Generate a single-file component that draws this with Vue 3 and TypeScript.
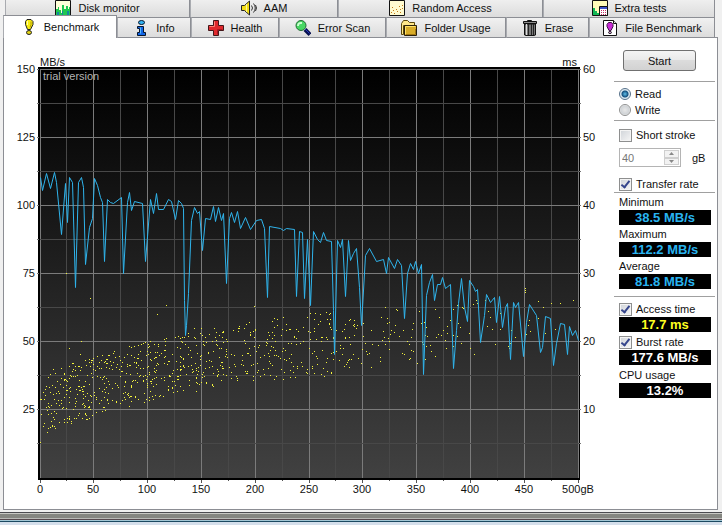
<script setup lang="ts">
import { ref } from 'vue'

interface Tab { label: string; icon: string }

const backTabs: Tab[] = [
  { label: 'Disk monitor', icon: 'monitor' },
  { label: 'AAM', icon: 'speaker' },
  { label: 'Random Access', icon: 'scatter' },
  { label: 'Extra tests', icon: 'extra' },
]
const frontTabs: Tab[] = [
  { label: 'Benchmark', icon: 'exclaim' },
  { label: 'Info', icon: 'info' },
  { label: 'Health', icon: 'cross' },
  { label: 'Error Scan', icon: 'magnifier' },
  { label: 'Folder Usage', icon: 'folder' },
  { label: 'Erase', icon: 'trash' },
  { label: 'File Benchmark', icon: 'file' },
]
const tabRows = [backTabs, frontTabs]
const active = ref('Benchmark')

const mode = ref('read')
const shortStroke = ref(false)
const strokeSize = ref('40')
const transferRate = ref(true)
const accessTime = ref(true)
const burstRate = ref(true)

const rates = [
  { label: 'Minimum', value: '38.5 MB/s' },
  { label: 'Maximum', value: '112.2 MB/s' },
  { label: 'Average', value: '81.8 MB/s' },
]

// Grid geometry, in chart units
const gridX = [40, 66, 93, 120, 147, 174, 201, 228, 255, 282, 309, 335, 362, 389, 416, 443, 470, 497, 524, 551, 578]
const gridY = [69, 103, 137, 171, 205, 239, 273, 307, 341, 375, 409, 443]
const xLabels = gridX.filter((_, i) => i % 2 === 0).map((x, i) => ({ x, text: i === 10 ? '500gB' : String(i * 50) }))
const yLabels = gridY.filter((_, i) => i % 2 === 0).map((y, i) => ({ y, left: 150 - i * 25, right: 60 - i * 10 }))

const transferLine = `40,177 42,190 46,173 50,188 54,172 56,182 61,234 65,183 67,222 69,177 72,182 75,287 78,182 81,177 83,187 85,264 89,227 92,218
94,178 97,185 100,197 102,202 104,261 107,199 110,202 113,203 121,197 123,273 127,202 129,192 131,210 134,201 142,203 145,261 150,199 153,213
156,193 158,209 163,209 168,199 171,201 175,219 178,200 181,203 183,208 184,300 185,335 186,325 188,293 191,220 194,207 197,213 199,211 202,250
205,218 210,219 213,206 215,221 218,207 221,220 223,213 226,283 229,218 231,212 234,222 237,211 240,228 245,217 250,229 256,220 261,219 264,228
267,297 269,226 280,228 283,230 286,228 294,229 296,296 299,231 302,232 304,298 307,239 310,305 313,231 317,239 320,242 323,232 326,240 331,241
333,310 334,354 337,240 340,247 342,239 345,296 348,240 350,260 353,253 356,248 359,287 361,325 365,255 369,248 376,261 383,259 386,273 388,257
394,268 397,259 401,265 404,318 407,273 410,263 413,269 415,261 418,273 421,264 423,374 426,295 429,282 432,274 434,300 437,284 440,284 442,277
445,288 450,284 453,368 456,330 458,303 461,278 464,307 467,321 469,280 473,286 475,291 477,289 480,342 484,315 486,294 490,302 494,297 496,322
499,296 502,327 505,307 507,303 510,359 513,302 515,307 518,302 523,356 526,322 529,304 536,315 540,352 542,347 545,316 550,318 553,365 556,343
560,323 564,324 567,354 569,326 572,335 575,330 578,340`

// Access-time samples past 370 plus the stray high ones
const samples: number[][] = [
  [66, 273], [90, 298], [157, 314], [166, 305], [194, 328], [201, 328], [214, 328], [246, 324], [249, 322], [254, 306], [274, 327], [277, 325], [283, 317],
  [81, 341], [69, 348], [80, 354], [194, 337], [188, 333],
  [371, 330], [372, 344], [378, 345], [380, 357], [371, 367], [380, 361], [381, 317], [385, 307], [387, 323], [389, 322], [383, 331], [384, 337], [382, 340],
  [388, 338], [389, 341], [385, 344], [389, 349], [387, 318], [396, 309], [397, 310], [394, 332], [391, 330], [390, 334], [395, 325], [403, 330], [407, 341],
  [399, 336], [411, 337], [412, 329], [413, 323], [409, 344], [402, 353], [404, 354], [411, 350], [413, 351], [410, 358], [409, 359], [417, 363], [419, 311],
  [421, 323], [424, 322], [426, 327], [425, 335], [422, 342], [423, 344], [427, 336], [426, 346], [431, 351], [435, 356], [435, 309], [439, 317], [447, 326],
  [443, 330], [438, 334], [441, 335], [447, 333], [445, 340], [436, 337], [430, 345], [425, 359], [450, 320], [453, 309], [457, 305], [462, 307], [463, 308],
  [458, 323], [460, 327], [453, 335], [457, 336], [453, 346], [446, 348], [461, 343], [469, 333], [470, 348], [474, 354], [473, 304], [476, 300], [477, 303],
  [485, 300], [488, 311], [490, 317], [487, 326], [492, 329], [495, 344], [500, 329], [508, 346], [509, 348], [510, 343], [511, 330], [515, 337], [525, 288],
  [525, 290], [525, 292], [529, 320], [528, 325], [530, 331], [538, 301], [538, 318], [543, 307], [551, 303], [560, 303], [573, 300], [545, 333], [555, 329],
  [526, 334], [500, 313],
]

// Dense band on the left: x, top edge, bottom edge, number of samples up to the next stop
const band = [
  [40, 382, 448, 28], [52, 370, 432, 62], [72, 363, 424, 62], [90, 358, 420, 62], [110, 352, 410, 62], [135, 344, 408, 66],
  [155, 340, 399, 60], [180, 336, 396, 62], [204, 332, 393, 48], [225, 330, 381, 48], [255, 322, 382, 58], [290, 316, 380, 54],
  [325, 312, 377, 44], [350, 314, 368, 20], [372, 314, 366, 0],
]
let seed = 7
function rand(): number {
  seed = (seed * 16807) % 2147483647
  return seed / 2147483647
}
for (let i = 0; i < band.length - 1; i++) {
  const a = band[i]
  const b = band[i + 1]
  for (let n = 0; n < a[3]; n++) {
    const t = rand()
    const top = a[1] + (b[1] - a[1]) * t
    const bottom = a[2] + (b[2] - a[2]) * t
    samples.push([Math.floor(a[0] + (b[0] - a[0]) * t), Math.floor(top + (bottom - top) * rand())])
  }
}
const dots = samples.map(([x, y]) => `M${x} ${y}h1v1h-1z`).join('')
</script>

<template>
  <div class="window">
    <div class="tabs" role="tablist">
      <div v-for="(row, r) in tabRows" :key="r" class="tab-row" :class="r ? 'front' : 'back'">
        <button v-for="tab in row" :key="tab.label" class="tab" :class="{ active: tab.label === active }"
          type="button" role="tab" :aria-selected="tab.label === active" @click="active = tab.label">
          <svg class="icon" viewBox="0 0 16 16" aria-hidden="true">
            <g v-if="tab.icon === 'monitor'">
              <path d="M.5 0.5h15v15h-15z" fill="#ffffd8" stroke="#111" />
              <path d="M1 15V9h2V7h1v3h2v3h1V5h2v4h2V6h2v3h1V7h1v8z" fill="#20c850" />
              <path d="M2 15v-3h2v3zM7 15v-4h1v4zM12 15v-4h2v4z" fill="#1585a0" />
            </g>
            <g v-else-if="tab.icon === 'speaker'">
              <path d="M.5 5.500h3l5-4.500v14l-5-4.500h-3z" fill="#f2dc16" stroke="#222" />
              <path d="M5.500 4v8" stroke="#fff899" />
              <path d="M10.500 5.500q2 2.500 0 5M12.500 3.500q3.500 4.500 0 9M14.500 5q2 3 0 6" fill="none" stroke="#333" />
            </g>
            <g v-else-if="tab.icon === 'scatter'">
              <path d="M.5 .5h15v15h-15z" fill="#fffbd0" stroke="#111" />
              <path d="M2 12h1v1h-1zM4 10h1v1h-1zM5 13h1v1h-1zM7 9h1v1h-1zM8 11h1v1h-1zM10 6h1v1h-1zM11 9h1v1h-1zM13 5h1v1h-1zM13 8h1v1h-1zM3 7h1v1h-1zM11 12h1v1h-1z" fill="#c47a16" />
            </g>
            <g v-else-if="tab.icon === 'extra'">
              <path d="M.5 .5h15v15h-15z" fill="#fffbb8" stroke="#111" />
              <path d="M1 15V8h2v3h2v2h2v2z" fill="#13b755" />
              <path d="M7.500 6.500h8v9h-8z" fill="#fff" stroke="#111" />
              <path d="M8 7h7v2H8z" fill="#3d55ca" />
              <path d="M9 10h1v1h-1zM11 10h1v1h-1zM13 10h1v1h-1zM9 12h1v1h-1zM11 12h1v1h-1zM13 12h1v1h-1zM9 14h1v1h-1zM11 14h1v1h-1zM13 14h1v1h-1z" fill="#c42e64" />
            </g>
            <g v-else-if="tab.icon === 'exclaim'">
              <path d="M6 .5h4l2 2v3L9.500 10.500h-3L4.500 5.500v-3z" fill="#f7ec12" stroke="#222" />
              <path d="M6.500 2v4" stroke="#fffcae" />
              <path d="M10 2.500v3l-1 3" fill="none" stroke="#b49c05" />
              <ellipse cx="8" cy="13.500" rx="2.500" ry="2" fill="#e4d516" stroke="#222" />
            </g>
            <g v-else-if="tab.icon === 'info'">
              <ellipse cx="8.500" cy="2.500" rx="3" ry="2" fill="#31b4f4" stroke="#07162c" />
              <path d="M4.500 6.500h6v6h2v3h-8v-3h2v-4h-2z" fill="#1266e6" stroke="#07162c" />
              <path d="M7.500 7.500v6" stroke="#58bbff" />
            </g>
            <g v-else-if="tab.icon === 'cross'">
              <path d="M5.500 .5h5v5h5v5h-5v5h-5v-5h-5v-5h5z" fill="#df292d" stroke="#44171a" />
              <path d="M6.500 1.500v5h-5" fill="none" stroke="#ff8175" />
              <path d="M9.500 14.500v-5h5" fill="none" stroke="#a91520" />
            </g>
            <g v-else-if="tab.icon === 'magnifier'">
              <path d="M10 9.500l5 5" stroke="#07104f" stroke-width="4" />
              <path d="M10 9l4.500 4.500" stroke="#2537bc" />
              <circle cx="6" cy="5.500" r="5" fill="#48d764" stroke="#236b35" />
              <path d="M3 6q0-3.500 4-3" fill="none" stroke="#cbffd0" stroke-width="2" />
            </g>
            <g v-else-if="tab.icon === 'folder'">
              <path d="M.5 3.500l2-3h4l2 2h5v3h-11v9h-2z" fill="#ffe88a" stroke="#5b480c" />
              <path d="M3.500 5.500h12v10h-12z" fill="#d9ad28" stroke="#2a210b" />
              <path d="M4.500 14V6.500h10" fill="none" stroke="#ffe26a" />
              <path d="M5 14.500h9.500V9" fill="none" stroke="#a27713" />
            </g>
            <g v-else-if="tab.icon === 'trash'">
              <path d="M5.500 1.500v-1h4v1" fill="none" stroke="#111" />
              <path d="M1.500 1.500h13v2h-13z" fill="#8b8b8b" stroke="#111" />
              <path d="M2.500 4h11v11h-1v.5h-9v-.5h-1z" fill="#777" stroke="#111" />
              <path d="M4.500 4v11" stroke="#ddd" />
              <path d="M6.500 4v11M9.500 4v11M11.500 4v11" stroke="#242424" />
            </g>
            <g v-else>
              <path d="M1.500 .5h10l3 3v12h-13z" fill="#fff" stroke="#111" />
              <path d="M11.500 .5v3h3" fill="#ddd" stroke="#111" />
              <path d="M6.500 2.500h3l1.500 2v2l-2 4h-2l-2-4v-2z" fill="#c92bd7" stroke="#401247" />
              <ellipse cx="8" cy="12.500" rx="1.500" ry="1" fill="#e9a7ed" stroke="#222" />
            </g>
          </svg>
          <span>{{ tab.label }}</span>
        </button>
      </div>
    </div>

    <main class="page">
      <svg class="chart" viewBox="4 38 607 471" role="img" aria-label="Transfer rate and access time">
        <defs>
          <linearGradient id="plot" x1="0" y1="0" x2="0" y2="1">
            <stop offset="0" stop-color="#000" />
            <stop offset="1" stop-color="#414141" />
          </linearGradient>
        </defs>
        <rect x="38" y="67" width="542" height="413" fill="#000" />
        <rect x="41" y="69" width="537" height="409" fill="url(#plot)" />
        <g shape-rendering="crispEdges">
          <rect v-for="(x, i) in gridX" :key="'x' + x" :x="x" y="69" width="1" :height="409" :fill="i % 2 ? '#484848' : '#7b7b7b'" />
          <rect v-for="(y, i) in gridY" :key="'y' + y" x="40" :y="y" width="539" height="1" :fill="i % 2 ? '#484848' : '#7b7b7b'" />
          <rect v-for="(x, i) in gridX" :key="'tx' + x" :x="x" y="480" width="1" :height="i % 2 ? 1 : 3" fill="#555" />
          <rect v-for="y in gridY" :key="'tl' + y" x="37" :y="y" width="2" height="1" fill="#777" />
          <rect v-for="y in gridY" :key="'tr' + y" x="579" :y="y" width="2" height="1" fill="#777" />
          <path :d="dots" fill="#f4f43c" />
        </g>
        <polyline class="line" :points="transferLine" transform="translate(0.5 0.5)" />
        <text x="40" y="66">MB/s</text>
        <text x="577" y="66" text-anchor="end">ms</text>
        <text x="43" y="80" class="note">trial version</text>
        <template v-for="l in yLabels" :key="l.y">
          <text x="35" :y="l.y + 4" text-anchor="end">{{ l.left }}</text>
          <text x="583" :y="l.y + 4">{{ l.right }}</text>
        </template>
        <text v-for="l in xLabels" :key="l.x" :x="l.x" y="493" text-anchor="middle">{{ l.text }}</text>
      </svg>

      <aside class="side">
        <section class="start-box"><button class="start" type="button">Start</button></section>
        <section class="modes">
          <label class="option"><input v-model="mode" type="radio" name="mode" value="read" />Read</label>
          <label class="option"><input v-model="mode" type="radio" name="mode" value="write" />Write</label>
        </section>
        <section class="stroke">
          <label class="option"><input v-model="shortStroke" type="checkbox" />Short stroke</label>
          <div class="size">
            <div class="spin">
              <input id="stroke-size" v-model="strokeSize" type="text" :disabled="!shortStroke" />
              <div class="arrows">
                <button type="button" aria-label="Increase" :disabled="!shortStroke"><svg viewBox="0 0 5 3"><path d="M0 3l2.500-3L5 3z" /></svg></button>
                <button type="button" aria-label="Decrease" :disabled="!shortStroke"><svg viewBox="0 0 5 3"><path d="M0 0l2.500 3L5 0z" /></svg></button>
              </div>
            </div>
            <label for="stroke-size">gB</label>
          </div>
          <label class="option"><input v-model="transferRate" type="checkbox" />Transfer rate</label>
        </section>
        <section class="rates">
          <div v-for="m in rates" :key="m.label">
            <div class="caption">{{ m.label }}</div>
            <output class="readout blue">{{ m.value }}</output>
          </div>
        </section>
        <section class="others">
          <div>
            <label class="option"><input v-model="accessTime" type="checkbox" />Access time</label>
            <output class="readout yellow">17.7 ms</output>
          </div>
          <div>
            <label class="option"><input v-model="burstRate" type="checkbox" />Burst rate</label>
            <output class="readout">177.6 MB/s</output>
          </div>
          <div>
            <div class="caption">CPU usage</div>
            <output class="readout">13.2%</output>
          </div>
        </section>
      </aside>
    </main>
    <footer class="frame"></footer>
  </div>
</template>

<style>
body { margin: 0; background: #d5dfeb; }
</style>

<style scoped>
.window {
  background: #f0f0f0;
  color: #111;
  font: 11px/16px "Liberation Sans", Arial, sans-serif;
}
button, input { font: inherit; color: inherit; margin: 0; box-sizing: border-box; }
.tabs { padding: 0 7px 0 3px; }
.tab-row { display: grid; }
.back {
  grid-template-columns: 185fr 148fr 205fr 172fr;
  grid-template-rows: 17px;
  align-items: end;
  height: 17px;
  margin-left: 2px;
  overflow: hidden;
}
.front { grid-template-columns: 114fr 74fr 88fr 107fr 120fr 83fr 126fr; height: 20px; }
.tab {
  display: flex;
  align-items: center;
  justify-content: center;
  gap: 7px;
  min-width: 0;
  padding: 0;
  white-space: nowrap;
  border: 1px solid #8c8e94;
  border-bottom: 0;
  border-left-color: #a9abb0;
  background: linear-gradient(#f1f1f1, #dcdcdc);
}
.back .tab { height: 19px; border-top: 0; }
.front .tab { border-bottom: 1px solid #8c8e94; height: 21px; }
.front .tab.active {
  position: relative;
  top: -2px;
  height: 23px;
  background: #fff;
  border-bottom: 0;
}
.icon { width: 16px; height: 16px; flex: none; }
.page {
  display: grid;
  grid-template-columns: 1fr 106px;
  margin: 0 4px 0 3px;
  border: 1px solid #8c8e94;
  background: #fff;
}
.chart { display: block; width: 100%; }
.chart text { fill: #111; font-size: 11px; }
.chart .note { fill: #b4b4b4; }
.line { fill: none; stroke: #2fb4ec; stroke-width: 1; }
.side { padding-left: 3px; }
.side section { margin-right: 2px; padding-left: 5px; padding-right: 4px; border-bottom: 1px solid #a0a0a0; }
.side .others { border: 0; padding-top: 4px; }
.start-box { padding-top: 12px; padding-bottom: 10px; text-align: center; }
.start {
  display: block;
  width: 73px;
  height: 21px;
  margin-left: 4px;
  padding: 0;
  border: 1px solid #707070;
  border-radius: 3px;
  background: linear-gradient(#f4f4f4, #e9e9e9 50%, #dcdcdc 50%, #d2d2d2);
}
.modes { padding-top: 4px; padding-bottom: 2px; }
.stroke { padding-top: 6px; }
.option { display: flex; align-items: center; gap: 4px; height: 16px; white-space: nowrap; }
.option input { appearance: none; width: 12px; height: 12px; border: 1px solid #8e8f8f; flex: none; }
.option input[type="checkbox"] {
  width: 13px;
  height: 13px;
  background: linear-gradient(135deg, #cfd3d8, #f6f6f6);
  box-shadow: inset 0 0 0 1px #f4f4f4;
}
.option input[type="checkbox"]:checked { display: flex; align-items: center; justify-content: center; }
.option input[type="checkbox"]:checked::before {
  content: "";
  width: 3px;
  height: 7px;
  margin-bottom: 2px;
  border: solid #35458c;
  border-width: 0 2px 2px 0;
  transform: rotate(38deg);
}
.option input[type="radio"] { border-radius: 50%; background: radial-gradient(circle, #e8e8e8, #cfd3d6 60%, #f6f6f6 70%); }
.option input[type="radio"]:checked {
  border-color: #56718a;
  background: radial-gradient(circle at 50% 50%, #5fc0ea 0, #14507f 3px, #d3e4ee 4px, #fff 6px);
}
.size { display: flex; align-items: center; gap: 11px; margin: 5px 0 9px; height: 19px; }
.spin { display: flex; width: 62px; height: 19px; box-sizing: border-box; border: 1px solid #b4b4b4; padding: 1px; background: #fff; }
.spin input { flex: 1; min-width: 0; padding: 0 1px; border: 0; background: none; color: #777; }
.arrows { display: grid; width: 15px; }
.arrows button { display: flex; align-items: center; justify-content: center; min-height: 0; padding: 0; border: 1px solid #cfcfcf; background: #f2f2f2; }
.arrows svg { width: 5px; height: 3px; fill: #888; }
.rates { display: grid; gap: 1px; padding-top: 1px; padding-bottom: 7px; }
.others { display: grid; gap: 2px; }
.caption { height: 16px; line-height: 17px; }
.readout {
  display: block;
  height: 15px;
  line-height: 16px;
  font-size: 13px;
  font-weight: bold;
  text-align: center;
  white-space: nowrap;
  color: #fff;
  background: #000;
}
.blue { color: #28b4f0; }
.yellow { color: #ffff20; }
.frame {
  height: 11px;
  margin-top: 2px;
  background: linear-gradient(#4b4b50 0 1px, #c8c8c4 1px 2px, #858681 2px 6px, #b9b9b6 6px 7px, #57494e 7px 8px, #a3c8d6 8px 9px, #1c4a62 9px 10px, #d5dfeb 10px);
}
</style>
